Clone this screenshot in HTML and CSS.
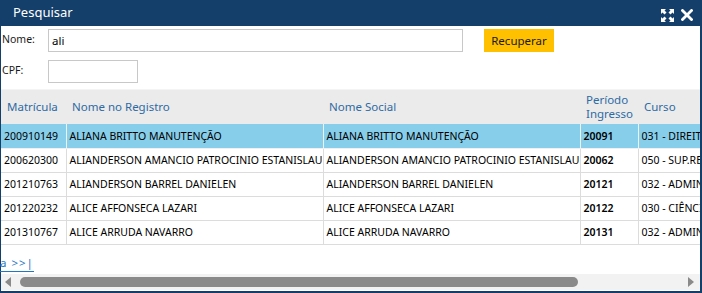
FILE: index.html
```html
<!DOCTYPE html>
<html lang="pt-BR">
<head>
    <meta charset="UTF-8">
    <title>Pesquisar</title>
    <link rel="stylesheet" href="styles.css">
</head>
<body>
    <div class="window">
        <div class="titlebar">
            <span class="title">Pesquisar</span>
            <div class="title-icons">
                <svg class="icon" width="13" height="13" viewBox="0 0 13 13">
                    <g fill="#fff">
                        <path d="M0 0h5l-1.5 1.5 2 2-2 2-2-2L0 5z"/>
                        <path d="M13 0v5l-1.5-1.5-2 2-2-2 2-2L8 0z"/>
                        <path d="M0 13V8l1.5 1.5 2-2 2 2-2 2L5 13z"/>
                        <path d="M13 13H8l1.5-1.5-2-2 2-2 2 2L13 8z"/>
                    </g>
                </svg>
                <svg class="icon" width="12" height="12" viewBox="0 0 12 12">
                    <path d="M1.5 1.5l9 9M10.5 1.5l-9 9" stroke="#fff" stroke-width="2.8" stroke-linecap="square"/>
                </svg>
            </div>
        </div>

        <div class="form">
            <div class="form-row">
                <label class="label">Nome:</label>
                <input class="input input-name" type="text" value="ali">
                <button class="btn-recuperar">Recuperar</button>
            </div>
            <div class="form-row">
                <label class="label">CPF:</label>
                <input class="input input-cpf" type="text">
            </div>
        </div>

        <div class="grid-wrap">
            <table class="grid">
                <colgroup>
                    <col style="width:65px">
                    <col style="width:257px">
                    <col style="width:257px">
                    <col style="width:58px">
                    <col style="width:200px">
                </colgroup>
                <thead>
                    <tr>
                        <th>Matrícula</th>
                        <th>Nome no Registro</th>
                        <th>Nome Social</th>
                        <th class="two-line">Período<br>Ingresso</th>
                        <th>Curso</th>
                    </tr>
                </thead>
                <tbody>
                    <tr class="selected">
                        <td>200910149</td>
                        <td>ALIANA BRITTO MANUTENÇÃO</td>
                        <td>ALIANA BRITTO MANUTENÇÃO</td>
                        <td class="bold">20091</td>
                        <td>031 - DIREITO</td>
                    </tr>
                    <tr>
                        <td>200620300</td>
                        <td>ALIANDERSON AMANCIO PATROCINIO ESTANISLAU</td>
                        <td>ALIANDERSON AMANCIO PATROCINIO ESTANISLAU</td>
                        <td class="bold">20062</td>
                        <td>050 - SUP.REDES</td>
                    </tr>
                    <tr>
                        <td>201210763</td>
                        <td>ALIANDERSON BARREL DANIELEN</td>
                        <td>ALIANDERSON BARREL DANIELEN</td>
                        <td class="bold">20121</td>
                        <td>032 - ADMINISTRAÇÃO</td>
                    </tr>
                    <tr>
                        <td>201220232</td>
                        <td>ALICE AFFONSECA LAZARI</td>
                        <td>ALICE AFFONSECA LAZARI</td>
                        <td class="bold">20122</td>
                        <td>030 - CIÊNCIAS</td>
                    </tr>
                    <tr>
                        <td>201310767</td>
                        <td>ALICE ARRUDA NAVARRO</td>
                        <td>ALICE ARRUDA NAVARRO</td>
                        <td class="bold">20131</td>
                        <td>032 - ADMINISTRAÇÃO</td>
                    </tr>
                </tbody>
            </table>
        </div>

        <div class="pager">
            <a class="pager-link" href="#">a &gt;&gt;|</a>
        </div>

        <div class="hscroll">
            <span class="arrow arrow-left"></span>
            <div class="track"><div class="thumb"></div></div>
            <span class="arrow arrow-right"></span>
        </div>
    </div>
</body>
</html>
```

FILE: styles.css
```css
* {
    margin: 0;
    padding: 0;
    box-sizing: border-box;
}

body {
    width: 702px;
    height: 293px;
    overflow: hidden;
    background: #fff;
    font-family: 'Noto Sans', 'Open Sans', sans-serif;
    font-size: 10.5px;
    color: #000;
}

.window {
    height: 293px;
    border-left: 1px solid #143f6b;
    border-right: 2px solid #143f6b;
    border-bottom: 2px solid #143f6b;
    display: flex;
    flex-direction: column;
}

/* Title bar */
.titlebar {
    height: 26px;
    background: #143f6b;
    display: flex;
    align-items: center;
    justify-content: space-between;
    padding: 0 9px 0 13px;
    margin-left: -1px;
    margin-right: -2px;
}

.title {
    color: #fff;
    font-size: 13px;
    margin-top: -2px;
}

.title-icons {
    display: flex;
    gap: 7px;
    align-items: center;
    margin-top: 4px;
}

/* Search form */
.form {
    padding: 3px 0 6px 1px;
    display: flex;
    flex-direction: column;
    gap: 8px;
}

.form-row {
    display: flex;
    align-items: flex-start;
}

.label {
    width: 46px;
    padding-top: 3px;
    font-size: 10.5px;
    color: #1a1a1a;
}

.input {
    height: 23px;
    border: 1px solid #c8c8c8;
    padding: 0 3px;
    font-family: 'Noto Sans', 'Open Sans', sans-serif;
    font-size: 11.5px;
    color: #000;
    outline: none;
}

.input-name {
    width: 415px;
}

.input-cpf {
    width: 90px;
}

.btn-recuperar {
    margin-left: 21px;
    width: 70px;
    height: 23px;
    background: #ffc000;
    border: none;
    font-family: 'Noto Sans', 'Open Sans', sans-serif;
    font-size: 11.5px;
    color: #1a1a1a;
}

/* Data grid */
.grid-wrap {
    overflow: hidden;
    border-top: 1px solid #f4f4f4;
}

.grid {
    border-collapse: collapse;
    table-layout: fixed;
    width: 837px;
}

.grid th {
    height: 34px;
    background: #ebebeb;
    color: #2e6aa3;
    font-weight: normal;
    font-size: 11.5px;
    text-align: left;
    padding: 0 6px;
    line-height: 14px;
    white-space: nowrap;
}

.grid td {
    height: 24px;
    padding: 0 3px;
    border: 1px solid #dcdcdc;
    border-top: none;
    white-space: nowrap;
    overflow: hidden;
    font-size: 10.5px;
}

.grid td:first-child {
    border-left: none;
}

.grid tr.selected td {
    background: #87ceeb;
    border-color: #f0f0f0;
}

.grid .bold {
    font-weight: 600;
}

/* Pager */
.pager {
    flex: 1;
    padding-top: 10px;
}

.pager-link {
    color: #1e78c2;
    text-decoration: none;
    border-bottom: 1px solid #1e78c2;
    font-size: 11.5px;
    letter-spacing: 1px;
    margin-left: -1px;
    padding-bottom: 1px;
}

/* Horizontal scrollbar */
.hscroll {
    height: 16px;
    margin-bottom: 1px;
    background: #f2f2f2;
    display: flex;
    align-items: center;
    padding: 0 6px 0 4px;
}

.arrow {
    width: 0;
    height: 0;
    border-top: 5px solid transparent;
    border-bottom: 5px solid transparent;
}

.arrow-left {
    border-right: 6px solid #8a8a8a;
}

.arrow-right {
    border-left: 6px solid #8a8a8a;
}

.track {
    flex: 1;
    padding: 0 3px 0 9px;
}

.thumb {
    width: 558px;
    height: 10px;
    background: #8a8a8a;
    border-radius: 5px;
}
```
